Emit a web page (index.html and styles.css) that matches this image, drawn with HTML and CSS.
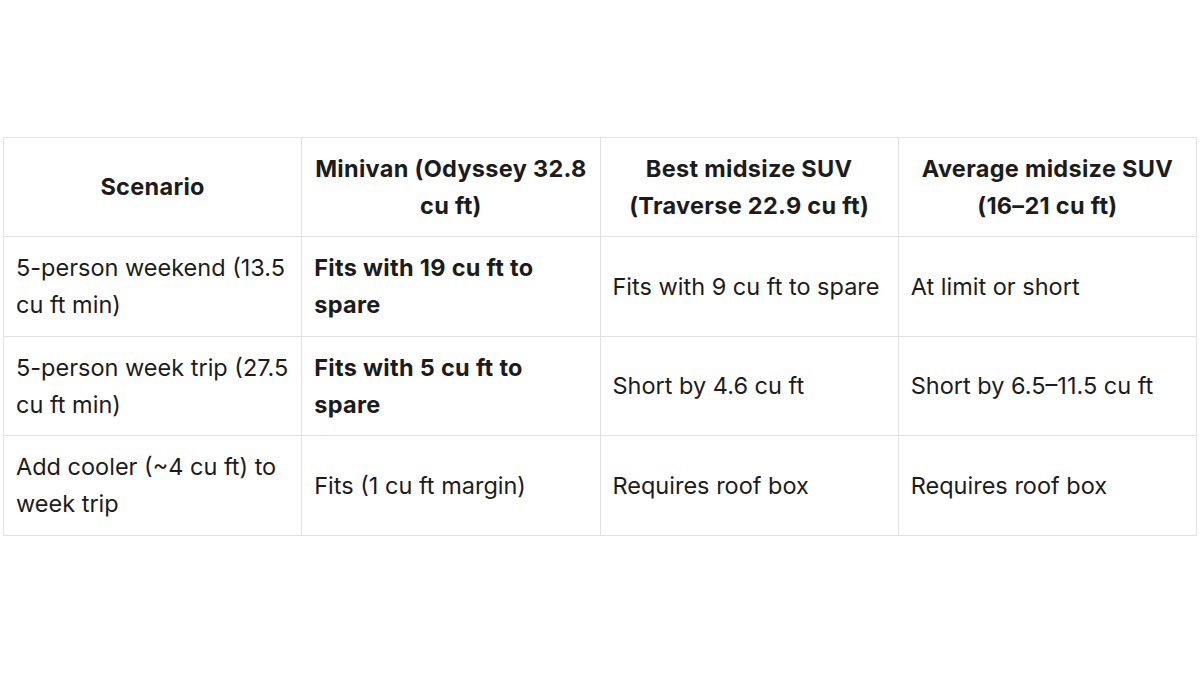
FILE: index.html
```html
<!DOCTYPE html>
<html lang="en">
<head>
<meta charset="utf-8">
<link rel="stylesheet" href="styles.css">
</head>
<body>
<div class="wrap">
<table class="cmp">
  <thead>
    <tr>
      <th>Scenario</th>
      <th>Minivan (Odyssey 32.8 cu ft)</th>
      <th>Best midsize SUV (Traverse 22.9 cu ft)</th>
      <th>Average midsize SUV (16–21 cu ft)</th>
    </tr>
  </thead>
  <tbody>
    <tr>
      <td>5-person weekend (13.5 cu ft min)</td>
      <td><strong>Fits with 19 cu ft to spare</strong></td>
      <td>Fits with 9 cu ft to spare</td>
      <td>At limit or short</td>
    </tr>
    <tr>
      <td>5-person week trip (27.5 cu ft min)</td>
      <td><strong>Fits with 5 cu ft to spare</strong></td>
      <td>Short by 4.6 cu ft</td>
      <td>Short by 6.5–11.5 cu ft</td>
    </tr>
    <tr>
      <td>Add cooler (~4 cu ft) to week trip</td>
      <td>Fits (1 cu ft margin)</td>
      <td>Requires roof box</td>
      <td>Requires roof box</td>
    </tr>
  </tbody>
</table>
</div>
</body>
</html>
```
FILE: styles.css
```css
html, body {
  margin: 0;
  padding: 0;
  background: #ffffff;
}
.wrap {
  height: 675px;
  display: flex;
  align-items: center;
  padding: 0 3px 3px;
  box-sizing: border-box;
}
.cmp {
  width: 100%;
  table-layout: fixed;
  border-collapse: collapse;
  font-family: Inter, "Helvetica Neue", Arial, sans-serif;
  font-size: 23.5px;
  line-height: 37.25px;
  color: #1c1c1c;
  border: 1px solid #e2e2e2;
}
.cmp th, .cmp td {
  border: 1px solid #e2e2e2;
  padding: 12px 12px;
  vertical-align: middle;
  text-align: left;
}
.cmp th {
  font-weight: 700;
  letter-spacing: 0.3px;
  text-align: center;
}
.cmp strong {
  font-weight: 700;
  letter-spacing: 0.3px;
}
```
